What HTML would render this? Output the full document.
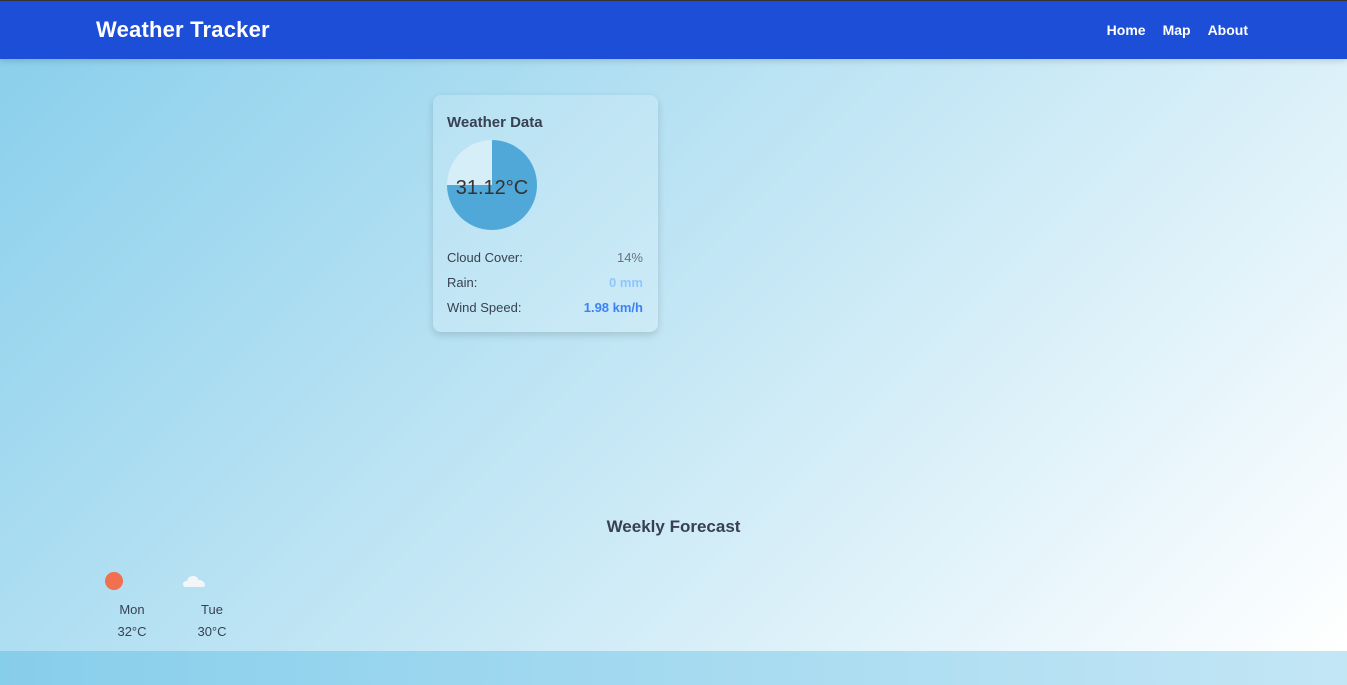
<!DOCTYPE html>
<html><head><style>
*{margin:0;padding:0;box-sizing:border-box}
html,body{width:1347px;height:685px;overflow:hidden;font-family:"Liberation Sans",sans-serif;color:#374151}
body{background:linear-gradient(135deg,#87ceeb,#ffffff) 0 0/1347px 651px;background-color:#87ceeb;position:relative}
.bot{position:absolute;left:0;top:651px;width:1347px;height:34px;background:linear-gradient(90deg,#87ceeb,#c3e6f5)}
header{position:absolute;top:0;left:0;width:1347px;height:59px;background:#1d4ed8;border-top:1px solid #333;box-shadow:0 2px 6px rgba(0,0,0,.15)}
header h1{position:absolute;left:96px;top:16px;font-size:22px;color:#fff;font-weight:bold;letter-spacing:.2px}
nav{position:absolute;top:21px;right:99px;color:#fff;font-size:14px;font-weight:bold}
nav span{margin-left:17px}
.card{position:absolute;left:433px;top:95px;width:225px;height:237px;background:rgba(255,255,255,.18);border-radius:8px;box-shadow:0 3px 8px rgba(0,0,0,.15)}
.card h2{position:absolute;left:14px;top:19px;font-size:15px;font-weight:bold;color:#374151}
.pie{position:absolute;left:14px;top:45px;width:90px;height:90px;border-radius:50%;background:conic-gradient(#4fa8d8 0 270deg,#d6eef8 270deg 360deg)}
.temp{position:absolute;left:0;top:37px;width:90px;text-align:center;font-size:20px;color:#333}
.row{position:absolute;left:14px;width:196px;font-size:13px;display:flex;justify-content:space-between}
.fc{position:absolute;top:517px;width:1347px;text-align:center;font-size:17px;font-weight:bold;color:#374151}
.day{position:absolute;top:599px;font-size:13px;text-align:center;width:60px;line-height:22px}
</style></head><body>
<header><h1>Weather Tracker</h1><nav><span>Home</span><span>Map</span><span>About</span></nav></header>
<div class="card"><h2>Weather Data</h2>
<div class="pie"><div class="temp">31.12°C</div></div>
<div class="row" style="top:155px"><span>Cloud Cover:</span><span style="color:#6b7280">14%</span></div>
<div class="row" style="top:180px"><span>Rain:</span><span style="color:#93c5fd;font-weight:bold">0 mm</span></div>
<div class="row" style="top:205px"><span>Wind Speed:</span><span style="color:#3b82f6;font-weight:bold">1.98 km/h</span></div>
</div>
<div class="fc">Weekly Forecast</div>
<div style="position:absolute;left:105px;top:572px;width:18px;height:18px;border-radius:50%;background:#f07050"></div>
<svg style="position:absolute;left:183px;top:574px" width="24" height="14"><path d="M3 13 Q0 13 0 10 Q0 7 4 7 Q5 2 10 2 Q15 2 15 6 Q17 5 19 7 Q22 8 22 11 Q22 13 19 13Z" fill="#f3f6f8"/></svg>
<div class="day" style="left:102px">Mon<br>32°C</div>
<div class="day" style="left:182px">Tue<br>30°C</div>
<div class="bot"></div>
</body></html>
